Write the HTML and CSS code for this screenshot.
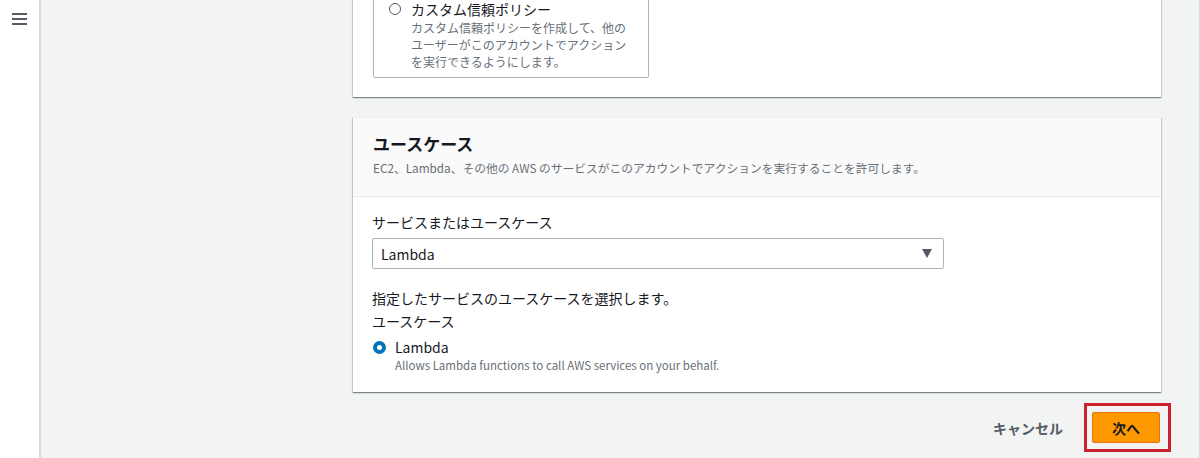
FILE: index.html
```html
<!DOCTYPE html>
<html lang="ja">
<head>
    <meta charset="UTF-8">
    <title>ロールを作成</title>
    <link rel="stylesheet" href="styles.css">
</head>
<body>
	<div class="sidebar">
		<div class="menu-btn">
			<span></span>
			<span></span>
			<span></span>
		</div>
	</div>
	<div class="main">
		<div class="content">
			<div class="card card-top">
				<div class="tile">
					<span class="radio"></span>
					<div class="tile-text">
						<div class="tile-title">カスタム信頼ポリシー</div>
						<div class="tile-desc">カスタム信頼ポリシーを作成して、他のユーザーがこのアカウントでアクションを実行できるようにします。</div>
					</div>
				</div>
			</div>

			<div class="card">
				<div class="card-header">
					<h2>ユースケース</h2>
					<p>EC2、Lambda、その他の AWS のサービスがこのアカウントでアクションを実行することを許可します。</p>
				</div>
				<div class="card-body">
					<div class="label">サービスまたはユースケース</div>
					<div class="select">
						<span>Lambda</span>
						<span class="caret"></span>
					</div>
					<div class="hint">指定したサービスのユースケースを選択します。</div>
					<div class="label-sub">ユースケース</div>
					<div class="option">
						<span class="radio checked"></span>
						<div>
							<div class="option-title">Lambda</div>
							<div class="option-desc">Allows Lambda functions to call AWS services on your behalf.</div>
						</div>
					</div>
				</div>
			</div>

			<div class="actions">
				<button class="btn-link">キャンセル</button>
				<span class="mark">
					<button class="btn-primary">次へ</button>
				</span>
			</div>
		</div>
	</div>
</body>
</html>
```

FILE: styles.css
```css
html, body {
	margin: 0;
	height: 458px;
	overflow: hidden;
}
body {
	display: flex;
	font-family: "Noto Sans CJK JP", "Noto Sans", sans-serif;
	color: #16191f;
	background: #f2f3f3;
}
.sidebar {
	width: 39px;
	flex: none;
	background: #fff;
	border-right: 2px solid #d5dbdb;
}
.menu-btn {
	margin: 13px 0 0 12px;
	width: 15px;
}
.menu-btn span {
	display: block;
	height: 2px;
	background: #545b64;
	margin-bottom: 3px;
}
.main {
	flex: 1;
	padding: 0 35px 0 312px;
	border-right: 1px solid #d5dbdb;
}
.content {
	width: 808px;
}
.card {
	background: #fff;
	box-shadow: 0 1px 1px 0 rgba(0,28,36,.3), 1px 1px 1px 0 rgba(0,28,36,.15), -1px 1px 1px 0 rgba(0,28,36,.15);
	border-top: 1px solid #eaeded;
	margin-bottom: 20px;
}
.card-top {
	margin-top: -31px;
	padding: 20px 20px 19px;
	border-top: none;
}
.tile {
	display: flex;
	width: 276px;
	box-sizing: border-box;
	border: 1px solid #aab7b8;
	border-radius: 2px;
	padding: 9px 14px 7px 15px;
}
.radio {
	flex: none;
	width: 12px;
	height: 12px;
	box-sizing: border-box;
	border: 1.5px solid #545b64;
	border-radius: 50%;
	margin: 4px 10px 0 0;
}
.radio.checked {
	width: 13px;
	height: 13px;
	border: 4.5px solid #0073bb;
	margin: 4px 9px 0 0;
}
.tile-title {
	font-size: 14px;
	line-height: 20px;
}
.tile-desc {
	font-size: 12px;
	line-height: 17px;
	color: #687078;
}
.card-header {
	background: #fafafa;
	padding: 14px 20px 20px;
	border-bottom: 1px solid #eaeded;
}
.card-header h2 {
	margin: 0;
	font-size: 17px;
	line-height: 24px;
	font-weight: 700;
}
.card-header p {
	margin: 4px 0 0;
	font-size: 11.75px;
	line-height: 16px;
	color: #687078;
}
.card-body {
	padding: 15px 20px 19px 19px;
}
.label, .hint, .label-sub {
	font-size: 14px;
	line-height: 20px;
}
.select {
	display: flex;
	justify-content: space-between;
	align-items: center;
	width: 572px;
	height: 31px;
	box-sizing: border-box;
	margin-top: 6px;
	border: 1px solid #aab7b8;
	border-radius: 2px;
	padding: 0 11px 0 8px;
	font-size: 14px;
}
.caret {
	width: 0;
	height: 0;
	border-left: 5px solid transparent;
	border-right: 5px solid transparent;
	border-top: 9px solid #545b64;
}
.hint {
	margin-top: 19px;
}
.label-sub {
	margin-top: 3px;
}
.option {
	display: flex;
	margin-top: 6px;
	padding-left: 1px;
}
.option-title {
	font-size: 14px;
	line-height: 20px;
}
.option-desc {
	font-size: 11.5px;
	line-height: 16px;
	color: #687078;
}
.actions {
	display: flex;
	justify-content: flex-end;
	align-items: center;
	gap: 29px;
	padding-right: 1px;
}
.btn-link {
	border: none;
	background: none;
	font-family: inherit;
	font-size: 14px;
	font-weight: 700;
	color: #545b64;
	padding: 0;
}
.mark {
	position: relative;
	display: block;
}
.mark::after {
	content: "";
	position: absolute;
	left: -8px;
	right: -11px;
	top: -9px;
	bottom: -9px;
	border: 3px solid #cc2131;
}
.btn-primary {
	display: block;
	width: 68px;
	height: 31px;
	border: 1px solid #ec7211;
	border-radius: 2px;
	background: #ff9900;
	font-family: inherit;
	font-size: 14px;
	font-weight: 700;
	color: #16191f;
	padding: 0;
}
```
